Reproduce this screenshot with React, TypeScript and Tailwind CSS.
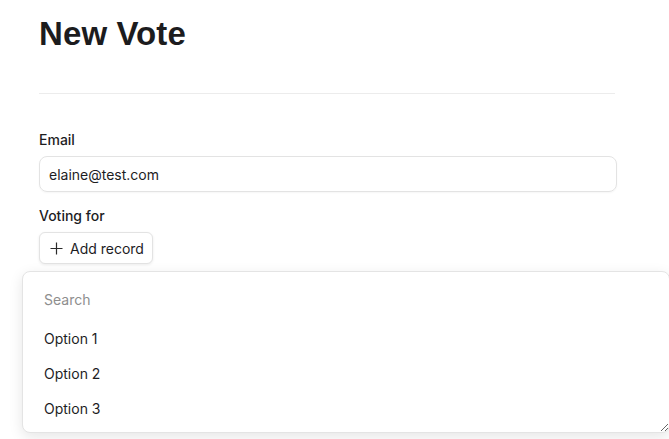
export default function App() {
  return (
    <div className="relative h-[439px] w-[669px] overflow-hidden bg-white font-['Inter',sans-serif] text-[#1d1d1f]">
      <div className="w-[617px] pl-[39px]">
        <h1 className="mt-[14px] font-['Liberation_Sans',Arial,sans-serif] text-[33px] font-bold leading-[40px] tracking-[0.1px] text-[#1c1c1e]">
          New Vote
        </h1>

        <div className="mt-[39px] w-[576px] border-t border-[#ececec]" />

        {/* Email */}
        <label className="mt-[36px] block text-[14px] font-medium leading-[20px]">Email</label>
        <div className="mt-[6px] flex h-[36px] w-[578px] items-center rounded-lg border border-[#e3e3e3] px-[9px] text-[14px] shadow-[0_1px_2px_rgba(0,0,0,0.04)]">
          elaine@test.com
        </div>

        {/* Voting for */}
        <label className="mt-[14px] block text-[14px] font-medium leading-[20px]">Voting for</label>
        <button className="mt-[6px] flex h-[32px] w-[114px] items-center gap-[7px] rounded-md border border-[#e3e3e3] bg-white pl-[10px] text-[14px] shadow-[0_1px_3px_rgba(0,0,0,0.08)]">
          <svg width="13" height="13" viewBox="0 0 13 13" fill="none" stroke="#2a2a2a" strokeWidth="1.2">
            <path d="M6.5 0.5v12M0.5 6.5h12" />
          </svg>
          Add record
        </button>
      </div>

      {/* Dropdown */}
      <div className="absolute left-[22px] top-[271px] h-[162px] w-[648px] resize overflow-auto rounded-lg border border-[#e4e4e4] bg-white pl-[21px] pt-[18px] text-[14px] shadow-[0_4px_14px_rgba(0,0,0,0.10)]">
        <div className="leading-[20px] text-[#8e8e8e]">Search</div>
        <ul className="mt-[19px] flex flex-col gap-[15px]">
          <li className="leading-[20px]">Option 1</li>
          <li className="leading-[20px]">Option 2</li>
          <li className="leading-[20px]">Option 3</li>
        </ul>
      </div>
    </div>
  );
}
